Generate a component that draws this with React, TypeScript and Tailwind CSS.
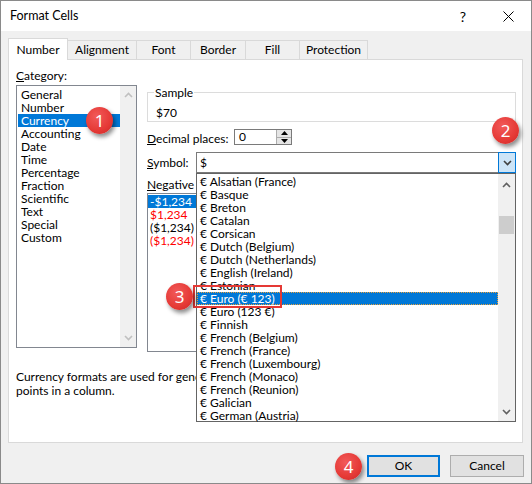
import React from 'react'

const categories = ['General', 'Number', 'Currency', 'Accounting', 'Date', 'Time', 'Percentage', 'Fraction', 'Scientific', 'Text', 'Special', 'Custom']

const symbols = [
  'Alsatian (France)',
  'Basque',
  'Breton',
  'Catalan',
  'Corsican',
  'Dutch (Belgium)',
  'Dutch (Netherlands)',
  'English (Ireland)',
  'Estonian',
  'Euro (€ 123)',
  'Euro (123 €)',
  'Finnish',
  'French (Belgium)',
  'French (France)',
  'French (Luxembourg)',
  'French (Monaco)',
  'French (Reunion)',
  'Galician',
  'German (Austria)',
]

const tabs = [
  { label: 'Alignment', w: 'w-[70px]' },
  { label: 'Font', w: 'w-[55px]' },
  { label: 'Border', w: 'w-[56px]' },
  { label: 'Fill', w: 'w-[55px]' },
  { label: 'Protection', w: 'w-[69px]' },
]

function Chevron({ up = false, color }: { up?: boolean; color: string }) {
  return (
    <svg width="9" height="6" viewBox="0 0 9 6">
      <path d={up ? 'M1 5L4.5 1.5L8 5' : 'M1 1L4.5 4.5L8 1'} fill="none" stroke={color} strokeWidth="1.6" />
    </svg>
  )
}

function Badge({ n, className }: { n: number; className: string }) {
  return (
    <div
      className={`absolute z-30 flex h-[27px] w-[27px] items-center justify-center rounded-full bg-[radial-gradient(circle_at_40%_35%,#f25a5a,#e53935_60%,#c62828)] font-['Noto_Sans',sans-serif] text-[17px] leading-none text-white shadow-[2px_3px_4px_rgba(0,0,0,0.45)] ${className}`}
    >
      {n}
    </div>
  )
}

export default function App() {
  return (
    <div className="relative h-[484px] w-[532px] overflow-hidden border border-[#8a8a8a] bg-[#f0f0f0] font-['Lato',sans-serif] text-[12px] text-black">
      {/* title bar */}
      <div className="flex h-[30px] items-center bg-white pl-[9px] pr-[8px]">
        <span className="text-[12.5px]">Format Cells</span>
        <span className="ml-auto w-[30px] text-center text-[14px]">?</span>
        <span className="ml-[15px] flex w-[30px] justify-center">
          <svg width="11" height="11" viewBox="0 0 11 11">
            <path d="M0.5 0.5L10.5 10.5M10.5 0.5L0.5 10.5" stroke="#000" strokeWidth="1" />
          </svg>
        </span>
      </div>

      {/* tabs */}
      <div className="relative z-10 mt-[7px] flex h-[22px] pl-[7px]">
        <div className="flex h-[22px] w-[60px] items-center justify-center border border-b-0 border-[#d9d9d9] bg-white">Number</div>
        {tabs.map((t) => (
          <div
            key={t.label}
            className={`-ml-px mt-[2px] flex h-[19px] items-center justify-center border border-b-0 border-[#d9d9d9] bg-[#f0f0f0] ${t.w}`}
          >
            {t.label}
          </div>
        ))}
      </div>

      {/* tab panel */}
      <div className="-mt-px ml-[7px] h-[384px] w-[515px] border border-[#d9d9d9] bg-white">
        <div className="flex pl-[7px]">
          {/* category column */}
          <div className="w-[121px]">
            <div className="mt-[8px] h-[15px] leading-[15px]">
              <span className="underline">C</span>ategory:
            </div>
            <div className="mt-[2px] flex h-[263px] border border-[#828790]">
              <div className="flex-1 pt-[2px]">
                {categories.map((c) => (
                  <div
                    key={c}
                    className={`ml-px h-[13px] pl-[3px] leading-[13px] ${c === 'Currency' ? 'bg-[#0078d7] text-white' : ''}`}
                  >
                    {c}
                  </div>
                ))}
              </div>
              <div className="flex w-[16px] flex-col items-center justify-between bg-[#f0f0f0] py-[6px]">
                <Chevron up color="#c0c0c0" />
                <Chevron color="#c0c0c0" />
              </div>
            </div>
          </div>

          {/* right column */}
          <div className="ml-[10px] w-[369px]">
            <fieldset className="mt-[25px] border border-[#dcdcdc] px-[5px] pb-px">
              <legend className="ml-px px-px leading-[15px]">Sample</legend>
              <div className="pt-[5px] pl-[3px] leading-[15px]">$70</div>
            </fieldset>

            <div className="mt-[7px] flex h-[16px] items-center">
              <div className="w-[87px] whitespace-nowrap pt-[3px]">
                <span className="underline">D</span>ecimal places:
              </div>
              <div className="flex h-[16px] w-[58px] items-center border border-[#7a7a7a] bg-white pl-[4px]">
                <span className="flex-1">0</span>
                <div className="flex h-[14px] w-[15px] flex-col border-l border-[#adadad] bg-[#e5e5e5]">
                  <div className="flex flex-1 items-center justify-center border-b border-[#adadad]">
                    <svg width="7" height="4" viewBox="0 0 7 4"><path d="M0 4L3.5 0L7 4Z" fill="#000" /></svg>
                  </div>
                  <div className="flex flex-1 items-center justify-center">
                    <svg width="7" height="4" viewBox="0 0 7 4"><path d="M0 0L3.5 4L7 0Z" fill="#000" /></svg>
                  </div>
                </div>
              </div>
            </div>

            <div className="mt-[7px] flex h-[21px] items-center">
              <div className="w-[49px] pt-[1px]">
                <span className="underline">S</span>ymbol:
              </div>
              <div className="relative flex h-[21px] w-[320px] items-center border border-[#7a7a7a] bg-white pl-[3px]">
                <span className="flex-1">$</span>
                <div className="-mr-px flex h-[21px] w-[18px] items-center justify-center border border-[#0078d7] bg-[#cce4f7]">
                  <Chevron color="#404040" />
                </div>

                {/* open dropdown */}
                <div className="absolute left-[-1px] top-[20px] z-20 flex h-[249px] w-[320px] border border-[#646464] bg-white">
                  <div className="flex-1 pt-px">
                    {symbols.map((s) => (
                      <div
                        key={s}
                        className={`h-[13px] pl-[3px] leading-[13px] ${s === 'Euro (€ 123)' ? 'bg-[#0078d7] text-white outline-1 outline-dotted outline-offset-[-1px] outline-[#e8a13c]' : ''}`}
                      >
                        € {s}
                      </div>
                    ))}
                  </div>
                  <div className="flex w-[17px] flex-col items-center bg-[#f0f0f0] pt-[8px] pb-[6px]">
                    <Chevron up color="#606060" />
                    <div className="mt-[28px] h-[18px] w-[15px] bg-[#cdcdcd]" />
                    <div className="mt-auto">
                      <Chevron color="#606060" />
                    </div>
                  </div>
                </div>
              </div>
            </div>

            {/* the rest of the label sits under the open dropdown */}
            <div className="mt-[4px] h-[15px] w-[49px] overflow-hidden whitespace-nowrap leading-[15px]">
              <span className="underline">N</span>egative numbers:
            </div>
            <div className="mt-px h-[159px] border border-[#828790] pt-px">
              <div className="h-[13px] bg-[#0078d7] pl-[2px] leading-[13px] text-white">-$1,234</div>
              <div className="h-[13px] pl-[2px] leading-[13px] text-[#ff0000]">$1,234</div>
              <div className="h-[13px] pl-[2px] leading-[13px]">($1,234)</div>
              <div className="h-[13px] pl-[2px] leading-[13px] text-[#ff0000]">($1,234)</div>
            </div>
          </div>
        </div>

        {/* hidden behind the dropdown past x=196 */}
        <div className="mt-[18px] ml-[7px] w-[180px] overflow-hidden whitespace-nowrap leading-[14px]">
          Currency formats are used for general monetary values.
          <br />
          points in a column.
        </div>
      </div>

      {/* buttons */}
      <div className="mt-[12px] flex justify-end gap-[10px] pr-[7px]">
        <button className="h-[22px] w-[73px] border-2 border-[#0078d7] bg-[#e1e1e1]">OK</button>
        <button className="h-[22px] w-[74px] border border-[#adadad] bg-[#e1e1e1]">Cancel</button>
      </div>

      {/* callouts */}
      <div className="absolute left-[192px] top-[284px] z-30 h-[23px] w-[89px] border-2 border-[#e53935]" />
      <Badge n={1} className="left-[85px] top-[106px]" />
      <Badge n={2} className="left-[491px] top-[116px]" />
      <Badge n={3} className="left-[165px] top-[282px]" />
      <Badge n={4} className="left-[334px] top-[452px]" />
    </div>
  )
}
